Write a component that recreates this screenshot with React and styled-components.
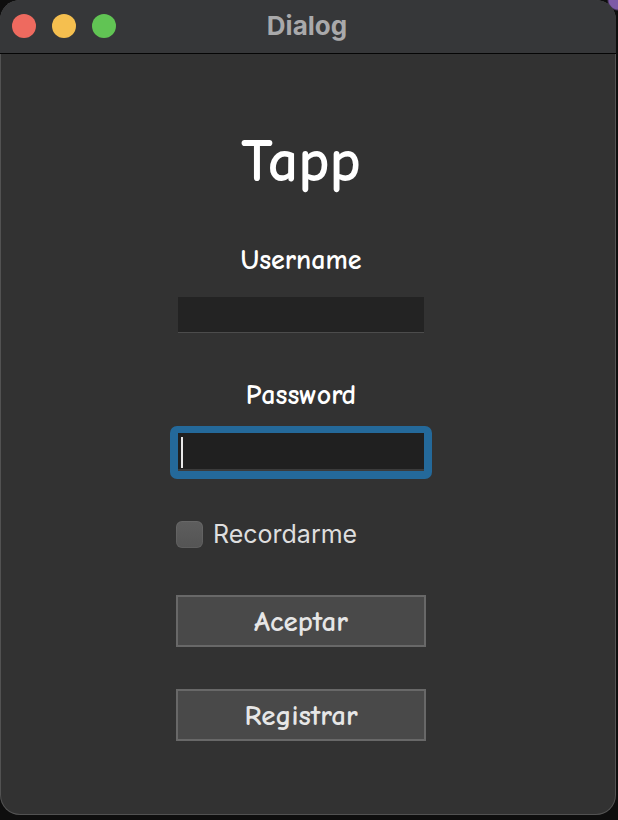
import React from "react";
import styled, { createGlobalStyle } from "styled-components";

const Global = createGlobalStyle`
  html, body { margin: 0; padding: 0; }
  body {
    width: 618px;
    height: 820px;
    overflow: hidden;
    background:
      radial-gradient(circle at 100% 0, #7d5ba6 0 9px, transparent 11px),
      #0e0e0e;
  }
`;

const comic = `"Comic Sans MS", "Comic Neue", "Chalkboard SE", cursive`;
const system = `Inter, "Noto Sans", "Liberation Sans", sans-serif`;

const Window = styled.div`
  width: 616px;
  height: 815px;
  box-sizing: border-box;
  border-radius: 20px;
  overflow: hidden;
  background: #323232;
  box-shadow: inset 0 0 0 1px rgba(255, 255, 255, 0.16);
  display: flex;
  flex-direction: column;
`;

const TitleBar = styled.div`
  height: 53px;
  flex: 0 0 53px;
  background: #363739;
  border-bottom: 1px solid #050505;
  display: flex;
  align-items: center;
  justify-content: center;
  position: relative;
`;

const Lights = styled.div`
  position: absolute;
  left: 12px;
  top: 14px;
  display: flex;
  gap: 16px;
`;

const Light = styled.span`
  width: 24px;
  height: 24px;
  border-radius: 50%;
  background: ${(p) => p.$c};
`;

const Title = styled.div`
  font-family: ${system};
  font-weight: 700;
  font-size: 26px;
  color: #a9a9ab;
  margin-left: -2px;
  margin-top: -2px;
`;

const Content = styled.div`
  flex: 1;
  display: flex;
  flex-direction: column;
  align-items: center;
  padding-right: 14px;
`;

const AppName = styled.div`
  margin-top: 77px;
  height: 60px;
  display: flex;
  align-items: center;
  font-family: ${comic};
  font-size: 60px;
  font-weight: 600;
  color: #ffffff;
`;

const Label = styled.div`
  margin-top: ${(p) => p.$mt}px;
  height: 30px;
  display: flex;
  align-items: center;
  font-family: ${comic};
  font-size: 28px;
  font-weight: 600;
  color: #ffffff;
`;

const Field = styled.div`
  width: 246px;
  height: 36px;
  box-sizing: border-box;
  background: #232323;
  border-bottom: 1px solid #4c4c4c;
  margin-top: ${(p) => p.$mt || 0}px;
`;

const FocusRing = styled.div`
  margin-top: 16px;
  padding: 7px 8px 8px 8px;
  background: #24699a;
  border-radius: 7px;
  display: flex;
`;

const FocusedField = styled(Field)`
  height: 38px;
  background: #202020;
  border-bottom: 2px solid #3b3b3b;
  position: relative;
`;

const Caret = styled.span`
  position: absolute;
  left: 3px;
  top: 4px;
  width: 2px;
  height: 31px;
  background: #e8e8e8;
`;

const CheckRow = styled.label`
  margin-top: 40px;
  width: 250px;
  height: 30px;
  display: flex;
  align-items: center;
  gap: 10px;
`;

const Box = styled.span`
  width: 27px;
  height: 27px;
  box-sizing: border-box;
  border-radius: 6px;
  background: linear-gradient(#5e5e5e, #545454);
  box-shadow: inset 0 0 0 1px rgba(255, 255, 255, 0.06);
`;

const CheckText = styled.span`
  font-family: ${system};
  font-size: 25px;
  color: #dedede;
`;

const Button = styled.button`
  margin-top: ${(p) => p.$mt}px;
  width: 250px;
  height: 52px;
  box-sizing: border-box;
  background: #494949;
  border: 2px solid #686868;
  border-radius: 0;
  font-family: ${comic};
  font-size: 29px;
  font-weight: 600;
  color: #e6e6e6;
  display: flex;
  align-items: center;
  justify-content: center;
  padding: 0;
`;

export default function App() {
  return (
    <>
      <Global />
      <Window>
        <TitleBar>
          <Lights>
            <Light $c="#ee6a5f" />
            <Light $c="#f5bf4f" />
            <Light $c="#61c454" />
          </Lights>
          <Title>Dialog</Title>
        </TitleBar>
        <Content>
          <AppName>Tapp</AppName>
          <Label $mt={54}>Username</Label>
          <Field $mt={22} />
          <Label $mt={47}>Password</Label>
          <FocusRing>
            <FocusedField>
              <Caret />
            </FocusedField>
          </FocusRing>
          <CheckRow>
            <Box />
            <CheckText>Recordarme</CheckText>
          </CheckRow>
          <Button $mt={46}>Aceptar</Button>
          <Button $mt={42}>Registrar</Button>
        </Content>
      </Window>
    </>
  );
}
